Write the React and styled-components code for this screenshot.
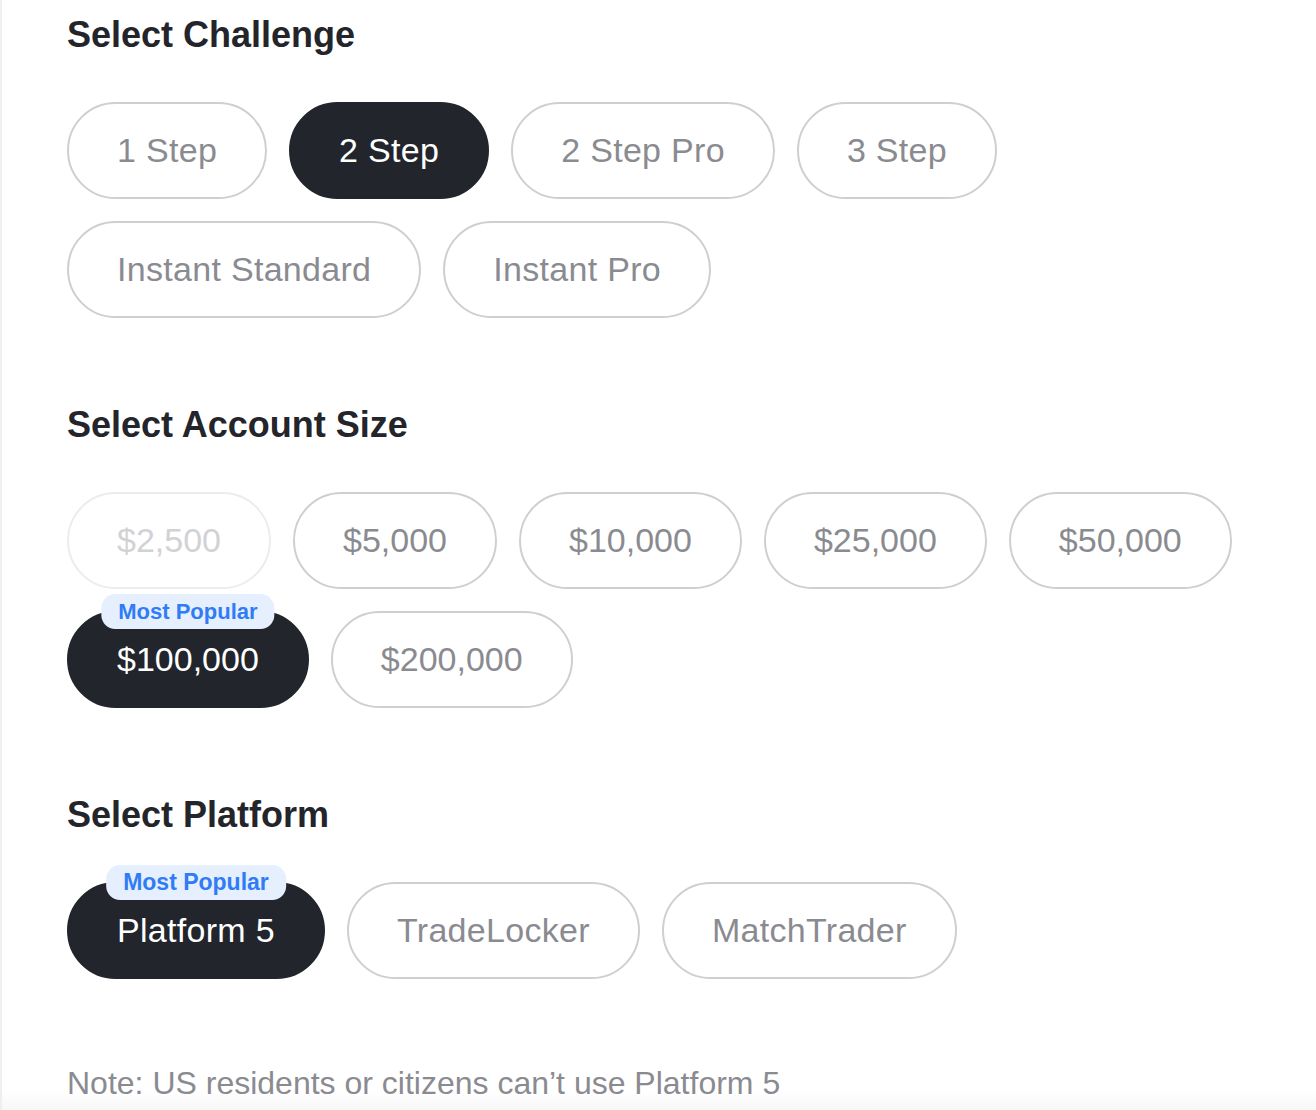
import styled, { createGlobalStyle } from "styled-components";

const GlobalStyle = createGlobalStyle`
    html, body {
        margin: 0;
        padding: 0;
        background: #ffffff;
    }
    body {
        font-family: "Liberation Sans", Arial, Helvetica, sans-serif;
    }
`

const challenges = ["1 Step", "2 Step", "2 Step Pro", "3 Step", "Instant Standard", "Instant Pro"];

// size options, the first one is greyed out for the chosen challenge
const sizes = [
    { label: "$2,500", disabled: true },
    { label: "$5,000" },
    { label: "$10,000" },
    { label: "$25,000" },
    { label: "$50,000" },
    { label: "$100,000", popular: true },
    { label: "$200,000" },
];

const platforms = [
    { label: "Platform 5", popular: true },
    { label: "TradeLocker" },
    { label: "MatchTrader" },
];

const App = () => {
    return (
        <>
            <GlobalStyle />
            <Page>
                <Section>
                    <Heading>Select Challenge</Heading>
                    <PillGroup>
                        {challenges.map((name) => (
                            <Pill key={name} $active={name === "2 Step"}>{name}</Pill>
                        ))}
                    </PillGroup>
                </Section>

                <Section>
                    <Heading>Select Account Size</Heading>
                    <PillGroup>
                        {sizes.map((size) => (
                            <Pill
                                key={size.label}
                                $numeric
                                $active={size.label === "$100,000"}
                                $disabled={size.disabled}
                            >
                                {size.popular && <Badge>Most Popular</Badge>}
                                {size.label}
                            </Pill>
                        ))}
                    </PillGroup>
                </Section>

                <Section>
                    <Heading>Select Platform</Heading>
                    <PillGroup>
                        {platforms.map((p) => (
                            <Pill key={p.label} $active={p.label === "Platform 5"}>
                                {p.popular && <Badge $size={23}>Most Popular</Badge>}
                                {p.label}
                            </Pill>
                        ))}
                    </PillGroup>
                </Section>

                <Note>Note: US residents or citizens can’t use Platform 5</Note>
            </Page>
        </>
    )
}

const Page = styled.div`
    min-height: 1110px;
    box-sizing: border-box;
    border-left: 2px solid #efeff0;
    padding: 14px 0 0 65px;
    background: linear-gradient(to bottom, #ffffff 1090px, #f7f7f8 1110px);
`

const Section = styled.div`
    margin-bottom: 86px;
`

const Heading = styled.h2`
    margin: 0 0 46px;
    font-size: 36px;
    line-height: 42px;
    font-weight: 700;
    color: #23252b;
`

const PillGroup = styled.div`
    display: flex;
    flex-wrap: wrap;
    gap: 22px;
    max-width: 1190px;
`

const Pill = styled.div`
    position: relative;
    display: flex;
    align-items: center;
    justify-content: center;
    box-sizing: border-box;
    height: 97px;
    padding: 0 48px;
    border-radius: 49px;
    border: 2px solid ${(p) => (p.$active ? "#22252c" : p.$disabled ? "#ececed" : "#cfcfd1")};
    background: ${(p) => (p.$active ? "#22252c" : "#ffffff")};
    color: ${(p) => (p.$active ? "#ffffff" : p.$disabled ? "#d2d2d5" : "#8a8b91")};
    font-size: 34px;
    letter-spacing: ${(p) => (p.$numeric ? "0" : "0.3px")};
    white-space: nowrap;
    cursor: pointer;
`

// little tag sitting on the top edge of a pill
const Badge = styled.span`
    position: absolute;
    top: 0;
    left: 50%;
    transform: translate(-50%, -54%);
    padding: 0 17px;
    height: 35px;
    display: flex;
    align-items: center;
    border-radius: 14px;
    background: #e6effd;
    color: #2f7cf6;
    font-size: ${(p) => p.$size || 22}px;
    font-weight: 700;
    letter-spacing: 0;
    white-space: nowrap;
`

const Note = styled.p`
    margin: 1px 0 0;
    font-size: 32px;
    line-height: 37px;
    color: #8a8b91;
`

export default App;
